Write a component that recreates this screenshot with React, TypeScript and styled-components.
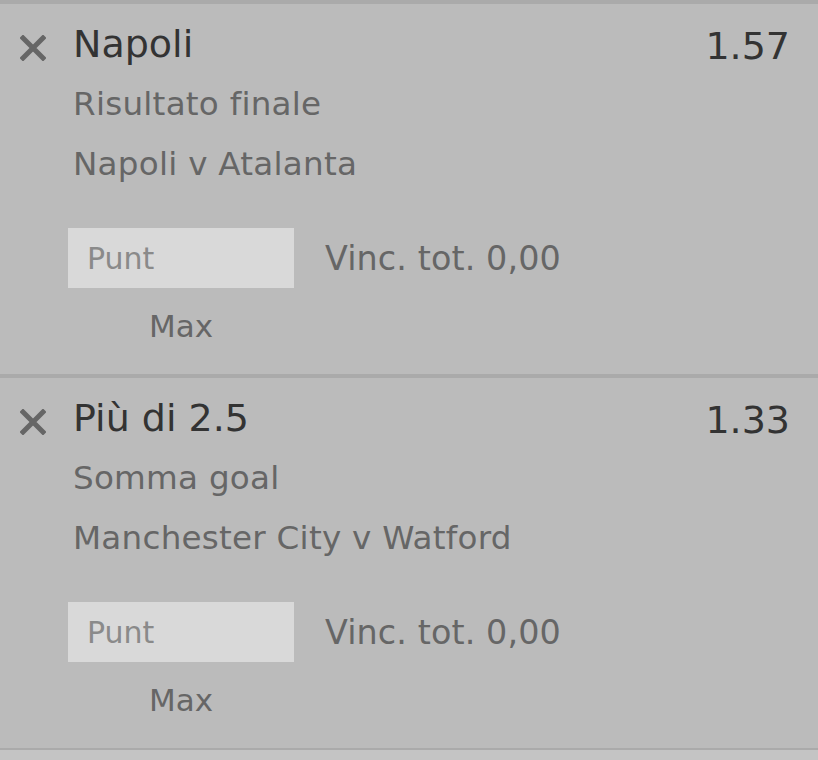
import React from "react";
import styled, { createGlobalStyle } from "styled-components";

const GlobalStyle = createGlobalStyle`
  html, body {
    margin: 0;
    padding: 0;
    background: #bbbbbb;
  }
  body {
    font-family: "DejaVu Sans", Verdana, sans-serif;
  }
`;

const Slip = styled.div`
  width: 818px;
  height: 760px;
  overflow: hidden;
  background: #bbbbbb;
`;

const Selection = styled.div`
  border-top: 4px solid #aaaaaa;
  height: 370px;
  box-sizing: content-box;
  display: grid;
  grid-template-columns: 73px 1fr auto;
  align-content: start;
`;

const Footer = styled.div`
  border-top: 2px solid #aaaaaa;
  height: 20px;
  background: #c4c4c4;
`;

const RemoveCell = styled.div`
  padding: 31px 0 0 20px;
`;

const Body = styled.div`
  display: flex;
  flex-direction: column;
`;

const Title = styled.div`
  font-size: 38px;
  line-height: 44px;
  color: #333333;
  margin-top: 18px;
`;

const Detail = styled.div<{ $gap?: number }>`
  font-size: 32.6px;
  letter-spacing: 0.25px;
  line-height: 60px;
  color: #666666;
  margin-top: ${(p) => p.$gap ?? 0}px;
`;

const Odds = styled.div`
  font-size: 38px;
  line-height: 44px;
  color: #333333;
  margin: 20px 28px 0 0;
`;

const StakeRow = styled.div`
  display: flex;
  align-items: flex-start;
  margin: 34px 0 0 -5px;
  gap: 31px;
`;

const StakeColumn = styled.div`
  display: flex;
  flex-direction: column;
  align-items: center;
  width: 226px;
`;

const StakeInput = styled.input`
  width: 226px;
  height: 60px;
  box-sizing: border-box;
  border: none;
  outline: none;
  background: #d9d9d9;
  padding: 0 0 0 19px;
  font-family: "DejaVu Sans", Verdana, sans-serif;
  font-size: 30px;
  color: #333;
  &::placeholder {
    color: #8a8a8a;
  }
`;

const Returns = styled.div`
  font-size: 33.4px;
  letter-spacing: 0.1px;
  color: #666666;
  line-height: 60px;
  padding-top: 1px;
`;

const Max = styled.div`
  font-size: 31px;
  color: #666666;
  margin-top: 18px;
  line-height: 40px;
`;

const CloseIcon = () => (
  <svg width="26" height="26" viewBox="0 0 26 26">
    <path
      d="M3 3 L23 23 M23 3 L3 23"
      stroke="#666666"
      strokeWidth="5"
      strokeLinecap="square"
    />
  </svg>
);

type Bet = {
  pick: string;
  market: string;
  event: string;
  odds: string;
};

const bets: Bet[] = [
  { pick: "Napoli", market: "Risultato finale", event: "Napoli v Atalanta", odds: "1.57" },
  { pick: "Più di 2.5", market: "Somma goal", event: "Manchester City v Watford", odds: "1.33" },
];

export default function App() {
  return (
    <Slip>
      <GlobalStyle />
      {bets.map((bet) => (
        <Selection key={bet.pick}>
          <RemoveCell>
            <CloseIcon />
          </RemoveCell>
          <Body>
            <Title>{bet.pick}</Title>
            <Detail $gap={8}>{bet.market}</Detail>
            <Detail>{bet.event}</Detail>
            <StakeRow>
              <StakeColumn>
                <StakeInput placeholder="Punt" />
                <Max>Max</Max>
              </StakeColumn>
              <Returns>Vinc. tot. 0,00</Returns>
            </StakeRow>
          </Body>
          <Odds>{bet.odds}</Odds>
        </Selection>
      ))}
      <Footer />
    </Slip>
  );
}
